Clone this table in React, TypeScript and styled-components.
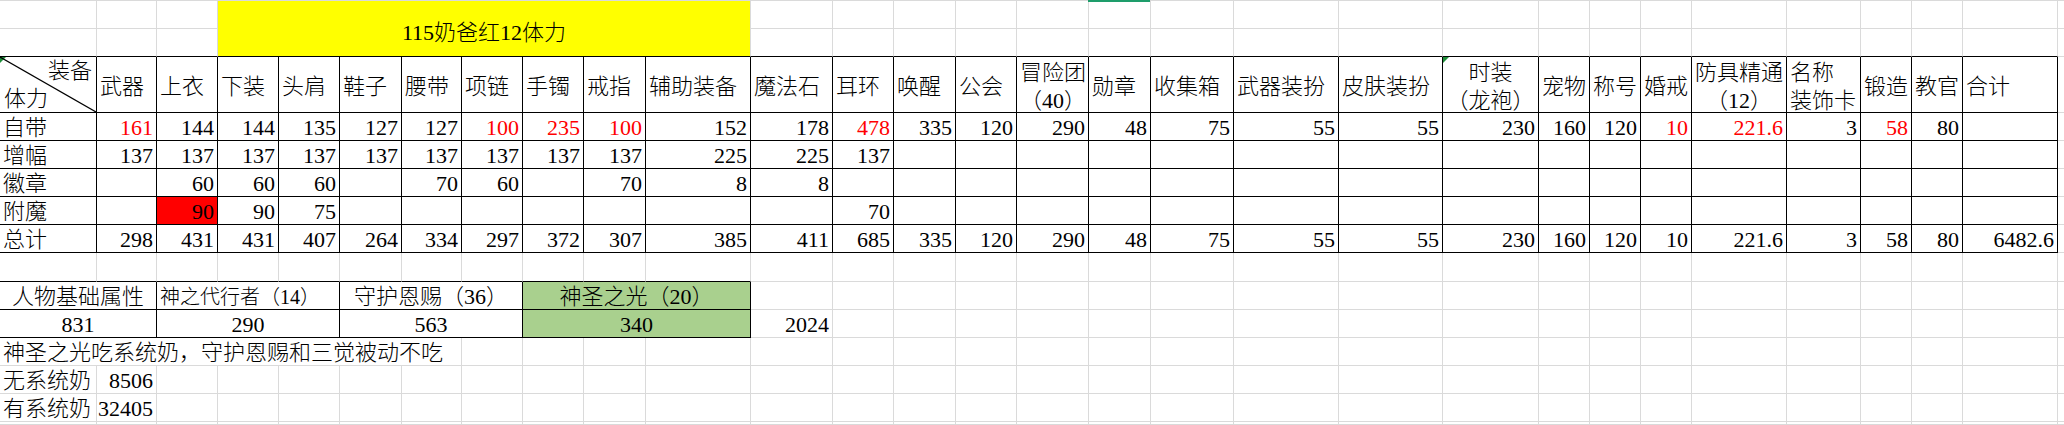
import React from 'react';
import styled, { createGlobalStyle } from 'styled-components';

const COLS = [97, 60, 61, 61, 61, 62, 60, 61, 61, 62, 105, 82, 61, 62, 61, 72, 62, 83, 105, 104, 96, 51, 51, 51, 95, 74, 51, 51, 95, 60];
const ROWS = [28, 28, 56, 28, 28, 28, 28, 28, 29, 28, 28, 28, 28, 28, 3];
const GRID = '#dadada';
const NCOL = COLS.length;

const Global = createGlobalStyle`
  html, body { margin: 0; padding: 0; background: #fff; overflow: hidden; }
  body { font-family: "Liberation Serif", "Noto Sans CJK SC", serif; }
`;

const Sheet = styled.div`
  display: grid;
  grid-template-columns: ${COLS.map((c) => c + 'px').join(' ')};
  grid-template-rows: ${ROWS.map((r) => r + 'px').join(' ')};
  width: max-content;
  border-top: 1px solid ${GRID};
  font-family: "Liberation Serif", "Noto Sans CJK SC", serif;
  font-weight: 300;
  font-size: 22px;
  color: #000;
`;

type Align = 'left' | 'right' | 'center';

interface CellProps {
  $align?: Align;
  $rb?: boolean;
  $bb?: boolean;
  $bg?: string;
  $color?: string;
  $span?: number;
  $rows?: number;
  $pt?: number;
  $size?: number;
}

const Cell = styled.div<CellProps>`
  box-sizing: border-box;
  position: relative;
  display: flex;
  align-items: center;
  justify-content: ${(p) => (p.$align === 'right' ? 'flex-end' : p.$align === 'center' ? 'center' : 'flex-start')};
  text-align: ${(p) => p.$align || 'left'};
  padding: ${(p) => p.$pt ?? 2}px 3px 0 3px;
  border-right: 1px solid ${(p) => (p.$rb ? '#000' : GRID)};
  border-bottom: 1px solid ${(p) => (p.$bb ? '#000' : GRID)};
  background: ${(p) => p.$bg || '#fff'};
  color: ${(p) => p.$color || '#000'};
  grid-column: span ${(p) => p.$span || 1};
  grid-row: span ${(p) => p.$rows || 1};
  white-space: nowrap;
  line-height: 28px;
  font-size: ${(p) => p.$size || 22}px;
  overflow: visible;
`;

const Corner = styled(Cell)`
  flex-direction: column;
  align-items: stretch;
  justify-content: flex-start;
  padding: 0 4px;
`;

const CornerLabel = styled.span<{ $side: 'start' | 'end' }>`
  display: block;
  position: relative;
  line-height: 28px;
  text-align: ${(p) => (p.$side === 'end' ? 'right' : 'left')};
`;

const Diagonal = styled.svg`
  position: absolute;
  inset: 0;
  width: 100%;
  height: 100%;
  pointer-events: none;
`;

const Stack = styled.div<{ $align: Align }>`
  display: flex;
  flex-direction: column;
  width: 100%;
  text-align: ${(p) => p.$align};
`;

const Line = styled.span`
  display: block;
  line-height: 28px;
`;

const TriMark = styled.span`
  position: absolute;
  top: 0;
  left: 0;
  width: 0;
  height: 0;
  border-top: 6px solid #1f8f3a;
  border-right: 6px solid transparent;
`;

const SelBar = styled.span`
  position: absolute;
  top: -1px;
  left: -1px;
  right: 0;
  height: 2px;
  background: #1e9d6b;
`;

type Header = string | { lines: string[]; align: Align };

const HEADERS: Header[] = [
  '武器', '上衣', '下装', '头肩', '鞋子', '腰带', '项链', '手镯', '戒指', '辅助装备', '魔法石', '耳环', '唤醒', '公会',
  { lines: ['冒险团', '（40）'], align: 'center' },
  '勋章', '收集箱', '武器装扮', '皮肤装扮',
  { lines: ['时装', '（龙袍）'], align: 'center' },
  '宠物', '称号', '婚戒',
  { lines: ['防具精通', '（12）'], align: 'center' },
  { lines: ['名称', '装饰卡'], align: 'left' },
  '锻造', '教官', '合计',
];

const blanks = (n: number) => Array.from({ length: n }, () => '');

const DATA: { label: string; values: string[] }[] = [
  {
    label: '自带',
    values: ['161r', '144', '144', '135', '127', '127', '100r', '235r', '100r', '152', '178', '478r', '335', '120', '290', '48', '75', '55', '55', '230', '160', '120', '10r', '221.6r', '3', '58r', '80', ''],
  },
  {
    label: '增幅',
    values: [...Array.from({ length: 9 }, () => '137'), '225', '225', '137', ...blanks(16)],
  },
  {
    label: '徽章',
    values: ['', '60', '60', '60', '', '70', '60', '', '70', '8', '8', ...blanks(17)],
  },
  {
    label: '附魔',
    values: ['', '90*', '90', '75', '', '', '', '', '', '', '', '70', ...blanks(16)],
  },
  {
    label: '总计',
    values: ['298', '431', '431', '407', '264', '334', '297', '372', '307', '385', '411', '685', '335', '120', '290', '48', '75', '55', '55', '230', '160', '120', '10', '221.6', '3', '58', '80', '6482.6'],
  },
];

const Empties: React.FC<{ from: number; to: number; blackBottomUntil?: number; prefix: string }> = ({ from, to, blackBottomUntil = 0, prefix }) => (
  <>
    {Array.from({ length: to - from + 1 }, (_, i) => {
      const col = from + i;
      return <Cell key={`${prefix}-${col}`} $bb={col <= blackBottomUntil} />;
    })}
  </>
);

const GREEN = '#a9d08e';

export default function App() {
  return (
    <>
      <Global />
      <Sheet>
        {/* Row 1 */}
        <Cell />
        <Cell />
        <Cell />
        <Cell $span={8} $rows={2} $bg="#ffff00" $bb $align="center" $pt={8}>
          115奶爸红12体力
        </Cell>
        {Array.from({ length: NCOL - 11 }, (_, i) => {
          const col = 12 + i;
          return (
            <Cell key={`r1-${col}`}>
              {col === 17 && <SelBar />}
            </Cell>
          );
        })}
        {/* Row 2 */}
        <Cell $bb />
        <Cell $bb />
        <Cell $bb />
        {Array.from({ length: NCOL - 11 }, (_, i) => {
          const col = 12 + i;
          return <Cell key={`r2-${col}`} $bb={col <= 29} />;
        })}

        {/* Header row */}
        <Corner $rb $bb>
          <TriMark />
          <Diagonal viewBox="0 0 100 100" preserveAspectRatio="none">
            <line x1="0" y1="0" x2="100" y2="100" stroke="#000" strokeWidth="1.2" vectorEffect="non-scaling-stroke" />
          </Diagonal>
          <CornerLabel $side="end">装备</CornerLabel>
          <CornerLabel $side="start">体力</CornerLabel>
        </Corner>
        {HEADERS.map((h, i) =>
          typeof h === 'string' ? (
            <Cell key={`h-${i}`} $rb $bb $pt={4}>
              {h}
            </Cell>
          ) : (
            <Cell key={`h-${i}`} $rb $bb $pt={4} $align={h.align}>
              {i === 19 && <TriMark />}
              <Stack $align={h.align}>
                {h.lines.map((l) => (
                  <Line key={l}>{l}</Line>
                ))}
              </Stack>
            </Cell>
          )
        )}
        <Cell key="h-extra" />

        {/* Data rows */}
        {DATA.map((row) => (
          <React.Fragment key={row.label}>
            <Cell $rb $bb>
              {row.label}
            </Cell>
            {row.values.map((v, i) => {
              const red = v.endsWith('r');
              const filled = v.endsWith('*');
              const text = v.replace(/[r*]$/, '');
              return (
                <Cell
                  key={`${row.label}-${i}`}
                  $rb
                  $bb
                  $align="right"
                  $color={red ? '#ff0000' : '#000'}
                  $bg={filled ? '#ff0000' : '#fff'}
                >
                  {text}
                </Cell>
              );
            })}
            <Cell />
          </React.Fragment>
        ))}

        {/* Spacer row above the summary table */}
        <Empties prefix="sp" from={1} to={NCOL} blackBottomUntil={11} />

        {/* Summary table header */}
        <Cell $span={2} $rb $bb $align="center">人物基础属性</Cell>
        <Cell $span={3} $rb $bb $align="left" $size={20}>神之代行者（14）</Cell>
        <Cell $span={3} $rb $bb $align="center">守护恩赐（36）</Cell>
        <Cell $span={3} $rb $bb $align="center" $bg={GREEN}>神圣之光（20）</Cell>
        <Empties prefix="sh" from={12} to={NCOL} />

        {/* Summary values */}
        <Cell $span={2} $rb $bb $align="center">831</Cell>
        <Cell $span={3} $rb $bb $align="center">290</Cell>
        <Cell $span={3} $rb $bb $align="center">563</Cell>
        <Cell $span={3} $rb $bb $align="center" $bg={GREEN}>340</Cell>
        <Cell $align="right">2024</Cell>
        <Empties prefix="sv" from={13} to={NCOL} />

        {/* Note */}
        <Cell $span={7}>神圣之光吃系统奶，守护恩赐和三觉被动不吃</Cell>
        <Empties prefix="nt" from={8} to={NCOL} />

        <Cell>无系统奶</Cell>
        <Cell $align="right">8506</Cell>
        <Empties prefix="n1" from={3} to={NCOL} />

        <Cell>有系统奶</Cell>
        <Cell $align="right">32405</Cell>
        <Empties prefix="n2" from={3} to={NCOL} />

        <Empties prefix="last" from={1} to={NCOL} />
      </Sheet>
    </>
  );
}
